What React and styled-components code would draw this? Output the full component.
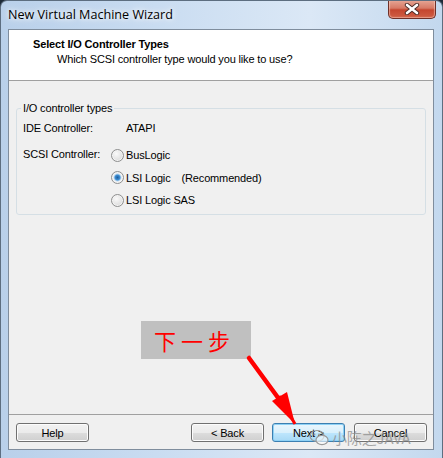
import React from "react";
import styled, { createGlobalStyle } from "styled-components";

const Global = createGlobalStyle`
    html, body {
        margin: 0;
        padding: 0;
        background: #1d2a38;
    }
    body {
        font-family: "Liberation Sans", Arial, sans-serif;
        font-size: 11px;
        letter-spacing: -0.15px;
        color: #000;
    }
`;

const App = () => {
    return (
        <>
            <Global />
            <Window>
                <TitleBar>
                    <Title>New Virtual Machine Wizard</Title>
                    <CloseBtn>
                        <svg width="16" height="12" viewBox="0 0 16 12">
                            <path d="M3 2 L13 10 M13 2 L3 10" stroke="#4a2a26" strokeWidth="4.4" strokeLinecap="round" />
                            <path d="M3 2 L13 10 M13 2 L3 10" stroke="#ffffff" strokeWidth="2.6" strokeLinecap="round" />
                        </svg>
                    </CloseBtn>
                </TitleBar>
                <Client>
                    <Header>
                        <HeaderTitle>Select I/O Controller Types</HeaderTitle>
                        <HeaderSub>Which SCSI controller type would you like to use?</HeaderSub>
                    </Header>
                    <Body>
                        <Group>
                            <Legend>I/O controller types</Legend>
                            <Row>
                                <RowLabel>IDE Controller:</RowLabel>
                                <Value>ATAPI</Value>
                            </Row>
                            <Row $top>
                                <RowLabel>SCSI Controller:</RowLabel>
                                <Options>
                                    <Option>
                                        <Radio />
                                        <span>BusLogic</span>
                                    </Option>
                                    <Option>
                                        <Radio $checked />
                                        <span>LSI Logic</span>
                                        <Note>(Recommended)</Note>
                                    </Option>
                                    <Option>
                                        <Radio />
                                        <span>LSI Logic SAS</span>
                                    </Option>
                                </Options>
                            </Row>
                        </Group>
                    </Body>
                    <Footer>
                        <Button>Help</Button>
                        <Spacer />
                        <Button>&lt; Back</Button>
                        <Button $default>Next &gt;</Button>
                        <Button $gap={9}>Cancel</Button>
                    </Footer>
                </Client>

                {/* annotation pasted over the screenshot */}
                <Callout>下一步</Callout>
                <Arrow width="70" height="80" viewBox="0 0 70 80">
                    <path d="M6 6 L44 58" stroke="#ff0000" strokeWidth="4.5" strokeLinecap="round" />
                    <polygon points="52,72 29,49 44,40" fill="#ff0000" />
                    <path d="M36 44 L52 72" stroke="#ff0000" strokeWidth="3" />
                </Arrow>
                <Watermark>
                    <svg width="20" height="18" viewBox="0 0 20 18">
                        <ellipse cx="8" cy="7" rx="7" ry="5.5" fill="none" stroke="#9a9a9a" strokeWidth="1.2" />
                        <ellipse cx="13" cy="11" rx="6" ry="4.6" fill="rgba(255,255,255,0.6)" stroke="#9a9a9a" strokeWidth="1.2" />
                        <circle cx="5.5" cy="5.5" r="0.9" fill="#9a9a9a" />
                        <circle cx="10" cy="5.5" r="0.9" fill="#9a9a9a" />
                    </svg>
                    <span>小陈之JAVA</span>
                </Watermark>
            </Window>
        </>
    );
};

const Window = styled.div`
    position: relative;
    box-sizing: border-box;
    width: 443px;
    height: 458px;
    display: flex;
    flex-direction: column;
    padding: 0 8px 8px 7px;
    border: 1px solid #5d6e80;
    border-bottom: none;
    border-radius: 7px 7px 0 0;
    background: linear-gradient(to right, #b9d0ea 0%, #c9dcf1 35%, #dbe8f6 70%, #c3d8ee 100%);
    overflow: hidden;
`;

const TitleBar = styled.div`
    height: 28px;
    display: flex;
    justify-content: space-between;
    align-items: flex-start;
`;

const Title = styled.div`
    font-family: "Open Sans", "Liberation Sans", sans-serif;
    font-size: 12.6px;
    letter-spacing: 0;
    color: #000;
    margin-top: 5px;
    text-shadow: 0 0 8px #ffffff, 0 0 4px #ffffff;
`;

const CloseBtn = styled.div`
    width: 46px;
    height: 18px;
    margin-top: -1px;
    margin-right: -2px;
    display: flex;
    align-items: center;
    justify-content: center;
    border: 1px solid #6e3028;
    border-top: none;
    border-radius: 0 0 5px 5px;
    background: linear-gradient(to bottom, #e7a796 0%, #d77a66 45%, #c5462f 55%, #cf5f45 100%);
    box-shadow: inset 0 0 1px 1px rgba(255, 220, 210, 0.5);
`;

const Client = styled.div`
    flex: 1;
    display: flex;
    flex-direction: column;
    border: 1px solid #7f8d9d;
    background: #f0f0f0;
`;

const Header = styled.div`
    height: 51px;
    box-sizing: border-box;
    padding: 7px 0 0 24px;
    background: #ffffff;
    border-bottom: 1px solid #a0a0a0;
`;

const HeaderTitle = styled.div`
    font-weight: bold;
    font-size: 11px;
    line-height: 15px;
`;

const HeaderSub = styled.div`
    margin-left: 24px;
    line-height: 15px;
`;

const Body = styled.div`
    flex: 1;
    padding: 20px 7px 0 7px;
`;

const Group = styled.fieldset`
    margin: 0;
    padding: 0 4px 2px 4px;
    border: 1px solid #d5dfe5;
    border-radius: 3px;
`;

const Legend = styled.legend`
    padding: 0 2px;
    line-height: 14px;
`;

const Row = styled.div`
    display: grid;
    grid-template-columns: 88px 1fr;
    align-items: ${(p) => (p.$top ? "start" : "center")};
    margin: ${(p) => (p.$top ? "6px 0 0 2px" : "3px 0 0 2px")};
    min-height: 20px;
`;

const RowLabel = styled.div`
    line-height: 20px;
`;

const Value = styled.div`
    padding-left: 15px;
`;

const Options = styled.div`
    display: flex;
    flex-direction: column;
`;

const Option = styled.div`
    display: flex;
    align-items: center;
    height: 22.5px;
    gap: 2px;
`;

const Radio = styled.span`
    box-sizing: border-box;
    width: 13px;
    height: 13px;
    border-radius: 50%;
    border: 1px solid #8e8f8f;
    background: ${(p) =>
        p.$checked
            ? "radial-gradient(circle, #1f5d9c 0, #3d8fd4 2.5px, #b9d6ef 3.5px, #f4f4f4 4.5px, #dcdcdc 100%)"
            : "radial-gradient(circle at 40% 35%, #fafafa 0, #e6e6e6 50%, #cfcfcf 100%)"};
    box-shadow: inset 0 0 0 1px #f4f4f4;
`;

const Note = styled.span`
    margin-left: 9px;
`;

const Footer = styled.div`
    display: flex;
    align-items: center;
    padding: 8px 6px 7px 7px;
    border-top: 1px solid #a0a0a0;
`;

const Spacer = styled.div`
    flex: 1;
`;

const Button = styled.button`
    box-sizing: border-box;
    width: 73px;
    height: 19px;
    margin-left: ${(p) => (p.$gap ? `${p.$gap}px` : "8px")};
    &:first-child {
        margin-left: 0;
    }
    padding: 0;
    font-family: "Liberation Sans", Arial, sans-serif;
    font-size: 11px;
    letter-spacing: -0.15px;
    color: #000;
    border-radius: 3px;
    border: 1px solid ${(p) => (p.$default ? "#3c7fb1" : "#707070")};
    background: ${(p) =>
        p.$default
            ? "linear-gradient(to bottom, #eaf6fd 0%, #d9f0fc 50%, #bee6fd 51%, #a7d9f5 100%)"
            : "linear-gradient(to bottom, #f2f2f2 0%, #ebebeb 50%, #dddddd 51%, #cfcfcf 100%)"};
    box-shadow: inset 0 0 0 1px ${(p) => (p.$default ? "#8ed1f5" : "#fcfcfc")};
`;

const Callout = styled.div`
    position: absolute;
    left: 140px;
    top: 320px;
    width: 110px;
    height: 38px;
    box-sizing: border-box;
    padding-left: 13px;
    display: flex;
    align-items: center;
    background: #c0c0c0;
    color: #ff0000;
    font-family: "Noto Sans CJK SC", sans-serif;
    font-size: 22px;
    letter-spacing: 5px;
`;

const Arrow = styled.svg`
    position: absolute;
    left: 242px;
    top: 351px;
`;

const Watermark = styled.div`
    position: absolute;
    left: 308px;
    top: 426px;
    display: flex;
    align-items: center;
    gap: 3px;
    color: rgba(140, 140, 140, 0.75);
    font-family: "Noto Sans CJK SC", sans-serif;
    font-size: 15px;
    pointer-events: none;
`;

export default App;
